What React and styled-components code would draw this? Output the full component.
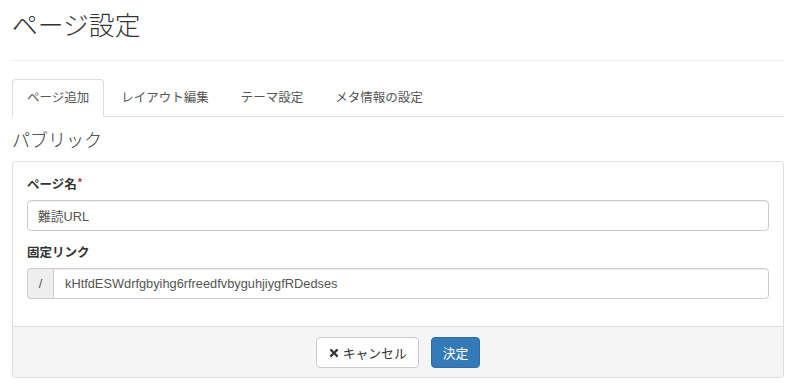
import React from "react";
import styled, { createGlobalStyle } from "styled-components";
import { FaTimes } from "react-icons/fa";

const GlobalStyle = createGlobalStyle`
  html, body { margin: 0; padding: 0; background: #fff; }
  body {
    font-family: "Liberation Sans", "Noto Sans CJK JP", sans-serif;
    font-size: 12.3px;
    color: #333;
  }
  * { box-sizing: border-box; }
`;

const Page = styled.div`
  padding: 0 16px 0 12px;
`;

const Title = styled.h1`
  margin: 0;
  padding-top: 11px;
  font-size: 25.8px;
  line-height: 30px;
  font-weight: 300;
  color: #333;
`;

const Divider = styled.hr`
  margin: 19px 0 18px;
  border: 0;
  border-top: 1px solid #eee;
`;

const TabList = styled.ul`
  display: flex;
  list-style: none;
  margin: 0;
  padding: 0;
  border-bottom: 1px solid #ddd;
`;

const Tab = styled.li`
  margin: 0 2px -1px 0;
  padding: 9px 14px;
  line-height: 18px;
  font-size: 12.5px;
  color: #555;
  border: 1px solid transparent;
  border-radius: 4px 4px 0 0;
  ${(p) => p.$active && `border-color: #ddd #ddd transparent; background: #fff;`}
`;

const SectionTitle = styled.h3`
  margin: 13px 0 9px;
  font-size: 18px;
  line-height: 22px;
  font-weight: 300;
  color: #333;
`;

const Panel = styled.div`
  border: 1px solid #ddd;
  border-radius: 4px;
  background: #fff;
  box-shadow: 0 1px 1px rgba(0, 0, 0, 0.05);
`;

const PanelBody = styled.div`
  padding: 14px;
`;

const FormGroup = styled.div`
  margin-bottom: 13px;
`;

const Label = styled.label`
  display: block;
  margin-bottom: 6px;
  font-weight: bold;
  line-height: 18px;
  font-size: 12.5px;
  color: #333;
`;

const Required = styled.sup`
  color: #a94442;
  font-size: 11px;
  margin-left: 1px;
  vertical-align: top;
  position: relative;
  top: -3px;
`;

const TextInput = styled.div`
  height: 31px;
  padding: 0 10px;
  display: flex;
  align-items: center;
  border: 1px solid #ccc;
  border-radius: 4px;
  color: #555;
  font-size: 12.8px;
  background: #fff;
  box-shadow: inset 0 1px 1px rgba(0, 0, 0, 0.075);
  flex: 1;
  ${(p) => p.$grouped && `border-top-left-radius: 0; border-bottom-left-radius: 0; padding-left: 11px;`}
`;

const InputGroup = styled.div`
  display: flex;
`;

const Addon = styled.span`
  width: 26px;
  height: 31px;
  display: flex;
  align-items: center;
  justify-content: center;
  background: #eee;
  border: 1px solid #ccc;
  border-right: 0;
  border-radius: 4px 0 0 4px;
  color: #555;
  font-size: 12.8px;
`;

const PanelFooter = styled.div`
  display: flex;
  justify-content: center;
  gap: 12px;
  padding: 10px 14px 9px;
  background: #f5f5f5;
  border-top: 1px solid #ddd;
  border-radius: 0 0 3px 3px;
`;

const Button = styled.button`
  display: inline-flex;
  align-items: center;
  gap: 3px;
  height: 31px;
  padding: 0 11px;
  font-family: inherit;
  font-size: 12.8px;
  border-radius: 4px;
  border: 1px solid ${(p) => (p.$primary ? "#2e6da4" : "#ccc")};
  background: ${(p) => (p.$primary ? "#337ab7" : "#fff")};
  color: ${(p) => (p.$primary ? "#fff" : "#333")};
  cursor: pointer;
`;

export default function App() {
  return (
    <>
      <GlobalStyle />
      <Page>
        <Title>ページ設定</Title>
        <Divider />
        <TabList>
          <Tab $active>ページ追加</Tab>
          <Tab>レイアウト編集</Tab>
          <Tab>テーマ設定</Tab>
          <Tab>メタ情報の設定</Tab>
        </TabList>
        <SectionTitle>パブリック</SectionTitle>
        <Panel>
          <PanelBody>
            <FormGroup>
              <Label>
                ページ名<Required>*</Required>
              </Label>
              <TextInput>難読URL</TextInput>
            </FormGroup>
            <FormGroup>
              <Label>固定リンク</Label>
              <InputGroup>
                <Addon>/</Addon>
                <TextInput $grouped>kHtfdESWdrfgbyihg6rfreedfvbyguhjiygfRDedses</TextInput>
              </InputGroup>
            </FormGroup>
          </PanelBody>
          <PanelFooter>
            <Button>
              <FaTimes size={12} color="#333" />
              キャンセル
            </Button>
            <Button $primary>決定</Button>
          </PanelFooter>
        </Panel>
      </Page>
    </>
  );
}
